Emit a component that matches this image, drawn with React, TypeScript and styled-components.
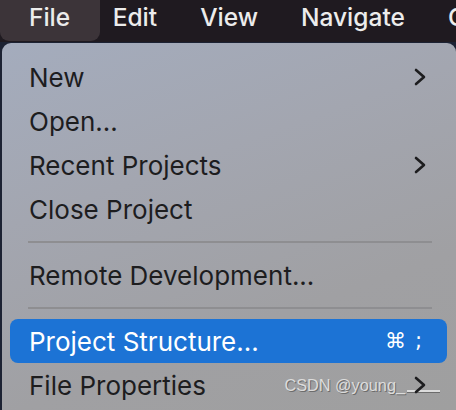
import React from 'react';
import styled, { createGlobalStyle } from 'styled-components';

const GlobalStyle = createGlobalStyle`
  html, body {
    margin: 0;
    padding: 0;
    background: #1c2233;
    overflow: hidden;
  }
  * { box-sizing: border-box; }
`;

const FONT = `Inter, "Open Sans", "Liberation Sans", sans-serif`;

const Screen = styled.div`
  width: 456px;
  height: 410px;
  display: flex;
  flex-direction: column;
  font-family: ${FONT};
  overflow: hidden;
`;

const MenuBar = styled.div`
  height: 42px;
  flex: none;
  display: flex;
  align-items: stretch;
  background: #1f1a20;
  white-space: nowrap;
`;

const BarItem = styled.div<{ $active?: boolean }>`
  flex: none;
  display: flex;
  align-items: center;
  padding: ${(p) => (p.$active ? '0 30px 0 29px' : '0 21.5px')};
  margin-right: ${(p) => (p.$active ? '-9px' : '0')};
  padding-bottom: 7px;
  font-size: 24.5px;
  font-weight: 500;
  color: #ececec;
  background: ${(p) => (p.$active ? '#3c3439' : 'transparent')};
  border-radius: 0 0 9px 9px;
  margin-bottom: 1px;
`;

const Panel = styled.div`
  flex: 1;
  margin: 1px 0 0 2px;
  padding: 12px 9px 0 8px;
  border-radius: 9px 9px 0 0;
  background: linear-gradient(160deg, #a4acbd 0%, #a3a6b0 35%, #a0a0a3 70%, #9f9f9f 100%);
  display: flex;
  flex-direction: column;
`;

const Item = styled.div<{ $selected?: boolean }>`
  height: 44px;
  flex: none;
  display: flex;
  align-items: center;
  justify-content: space-between;
  padding: 0 20px 0 19px;
  border-radius: 8px;
  font-size: 26px;
  color: ${(p) => (p.$selected ? '#ffffff' : '#1d1d1f')};
  background: ${(p) => (p.$selected ? '#1c73d5' : 'transparent')};
  position: relative;
`;

const Separator = styled.div`
  height: 2px;
  flex: none;
  margin: 10px 15px 10px 18px;
  background: #8e8e91;
`;

const Chevron = styled.svg`
  width: 14px;
  height: 18px;
  flex: none;
  position: relative;
`;

const Shortcut = styled.span`
  font-family: "DejaVu Sans", ${FONT};
  font-size: 21px;
  letter-spacing: 9px;
  margin-right: -4px;
`;

const Watermark = styled.span`
  position: absolute;
  right: 42px;
  top: 13px;
  font-family: "Liberation Sans", sans-serif;
  font-size: 16.3px;
  color: #dcdcdc;
  text-shadow: 1px 1px 0 #6c6c6c;
  pointer-events: none;
`;

const Strike = styled.span`
  position: absolute;
  right: 7px;
  top: 27px;
  width: 33px;
  height: 2px;
  background: #dcdcdc;
  box-shadow: 0 1px 0 #6c6c6c;
`;

function Arrow() {
  return (
    <Chevron viewBox="0 0 14 18">
      <path d="M3 2 L11 9 L3 16" fill="none" stroke="#1d1d1f" strokeWidth="2.6" strokeLinecap="round" strokeLinejoin="round" />
    </Chevron>
  );
}

const barItems = [
  { label: 'File', active: true },
  { label: 'Edit' },
  { label: 'View' },
  { label: 'Navigate' },
  { label: 'Code' },
];

export default function App() {
  return (
    <>
      <GlobalStyle />
      <Screen>
        <MenuBar>
          {barItems.map((b) => (
            <BarItem key={b.label} $active={b.active}>
              {b.label}
            </BarItem>
          ))}
        </MenuBar>
        <Panel>
          <Item>New<Arrow /></Item>
          <Item>Open...</Item>
          <Item>Recent Projects<Arrow /></Item>
          <Item>Close Project</Item>
          <Separator />
          <Item>Remote Development...</Item>
          <Separator />
          <Item $selected>
            Project Structure...
            <Shortcut>⌘;</Shortcut>
          </Item>
          <Item>
            File Properties
            <Watermark>CSDN @young_</Watermark>
            <Strike />
            <Arrow />
          </Item>
        </Panel>
      </Screen>
    </>
  );
}
